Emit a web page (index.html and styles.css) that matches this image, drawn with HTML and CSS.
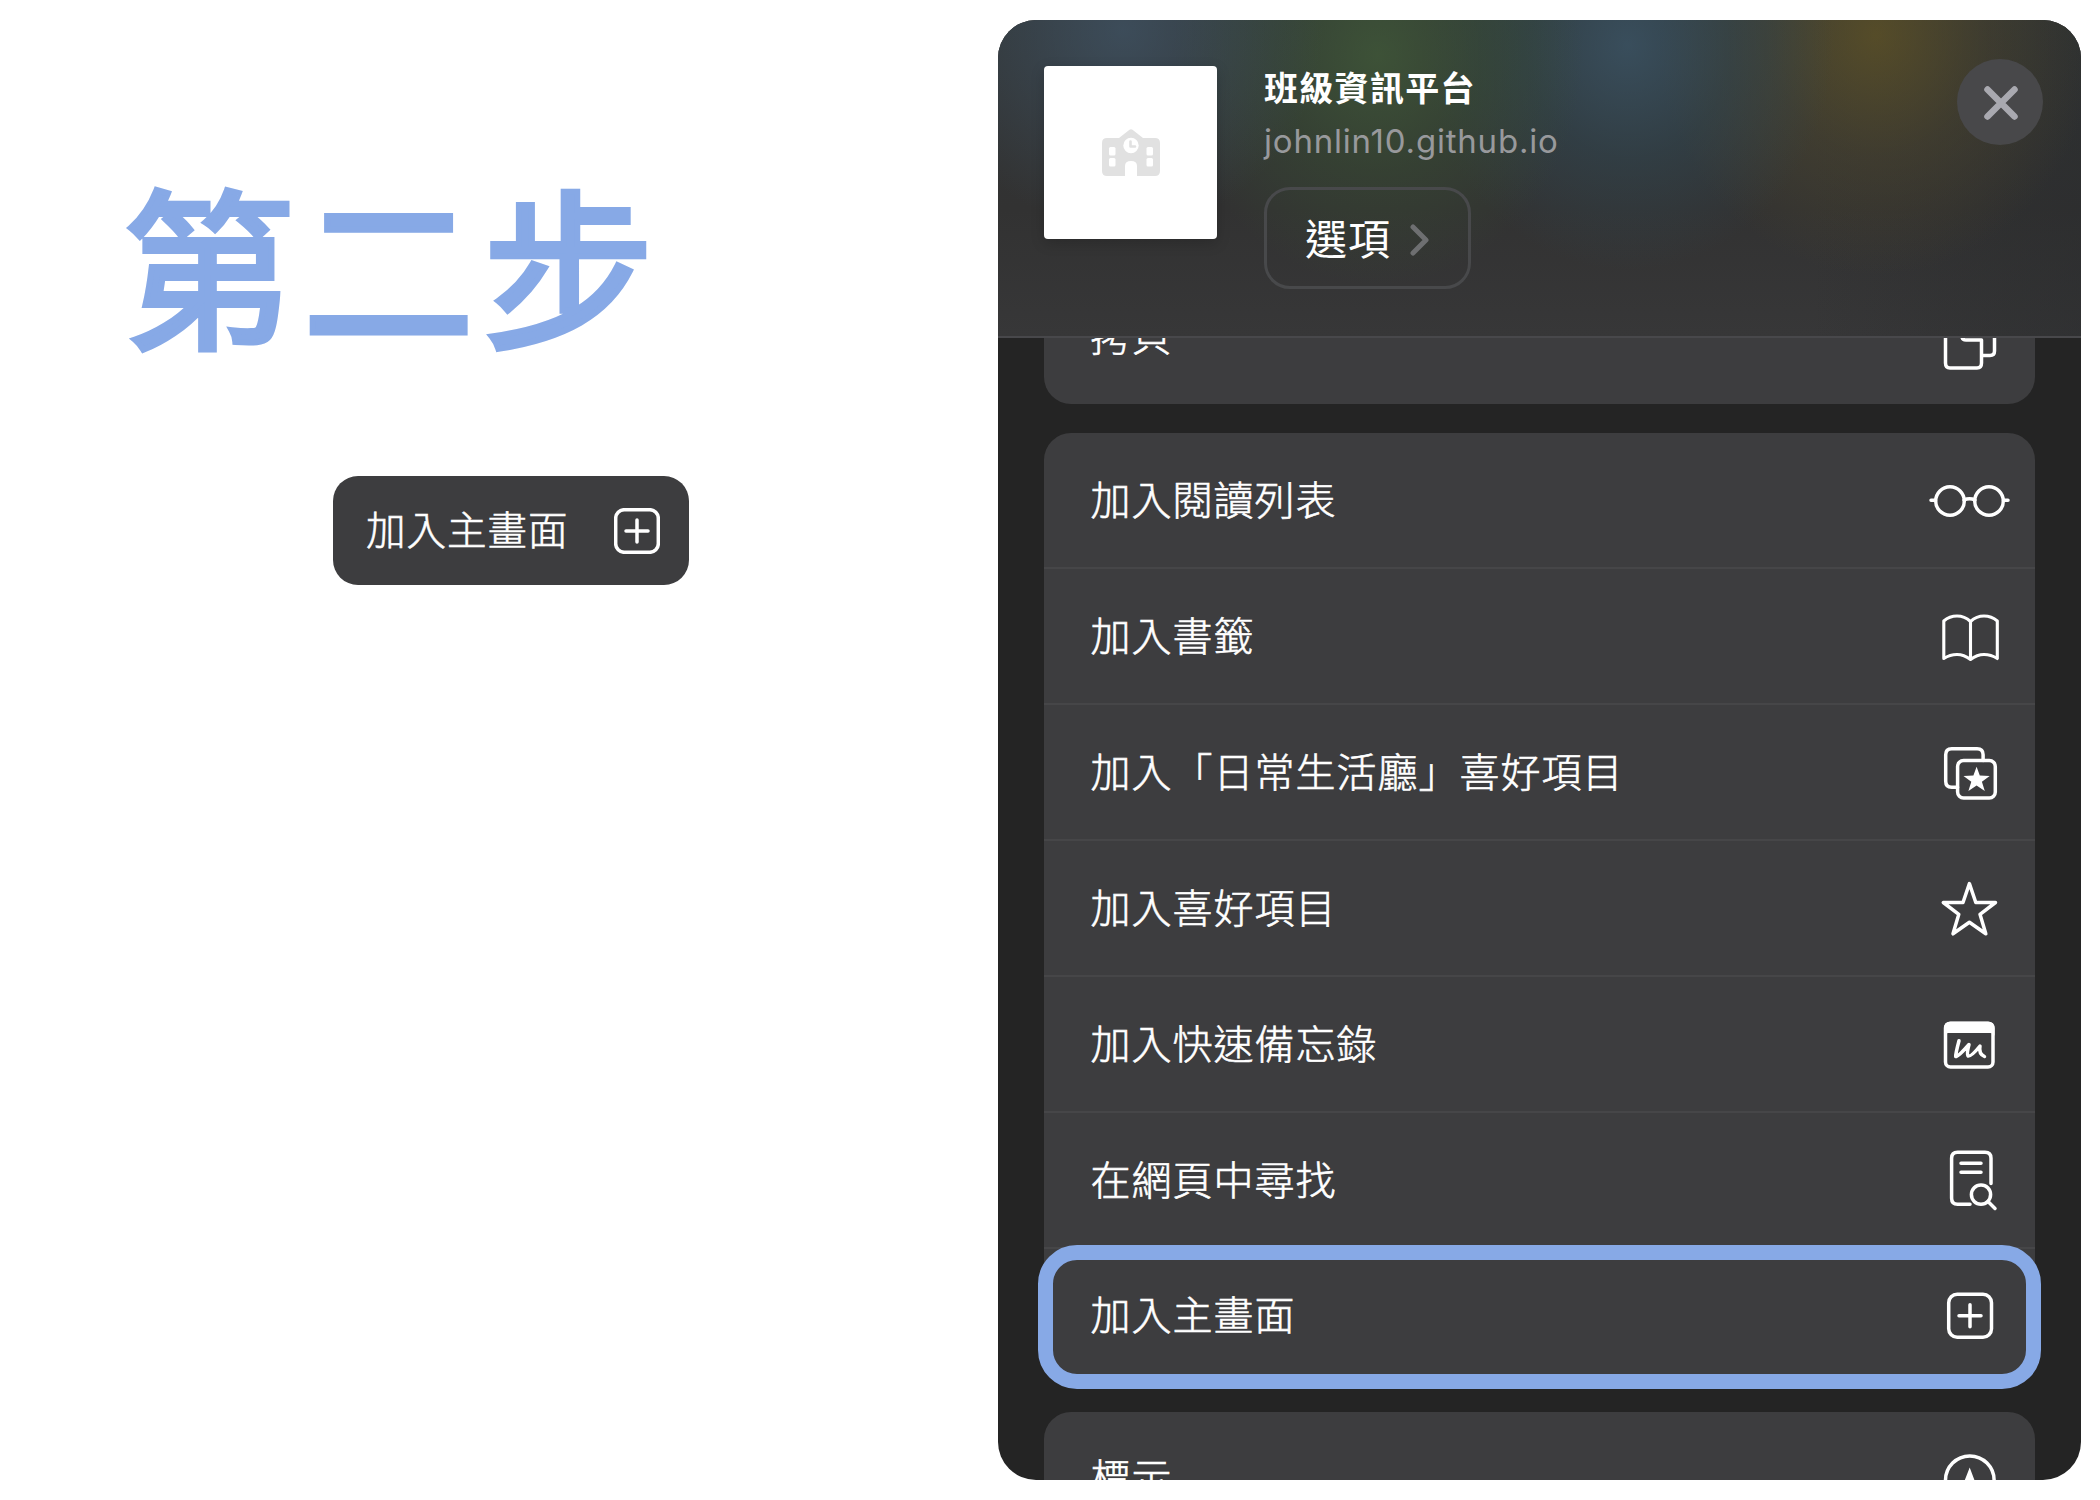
FILE: index.html
```html
<!DOCTYPE html>
<html lang="zh-Hant">
<head>
<meta charset="utf-8">
<title>第二步</title>
<link rel="stylesheet" href="styles.css">
</head>
<body>
<main class="page">
  <section class="step">
    <h1 class="step-title">第二步</h1>
    <div class="pill">
      <span class="pill-label">加入主畫面</span>
      <svg class="pill-icon" viewBox="0 0 46 46"><rect x="1.700" y="1.700" width="42.600" height="42.600" rx="8.500"/><path d="M23 12v22M12 23h22"/></svg>
    </div>
  </section>

  <section class="sheet">
    <header class="sheet-head">
      <div class="thumb">
        <svg class="school" viewBox="0 0 58 47">
          <path fill="#e1e1e1" d="M5 9H17L27.500 .8Q29 -.4 30.500 .8L41 9H53Q58 9 58 14V42Q58 47 53 47H35V37Q35 32 29 32T23 37V47H5Q0 47 0 42V14Q0 9 5 9Z"/>
          <circle cx="29" cy="16.500" r="7.700" fill="#fff"/>
          <path d="M28.500 12.500V17.500H33" fill="none" stroke="#e1e1e1" stroke-width="2.600"/>
          <g fill="#fff"><rect x="7" y="18" width="6.500" height="8.500" rx="1.500"/><rect x="7" y="29" width="6.500" height="8.500" rx="1.500"/><rect x="44.500" y="18" width="6.500" height="8.500" rx="1.500"/><rect x="44.500" y="29" width="6.500" height="8.500" rx="1.500"/></g>
        </svg>
      </div>
      <div class="site">
        <div class="site-name">班級資訊平台</div>
        <div class="site-url">johnlin10.github.io</div>
        <div class="options"><span class="options-label">選項</span><svg class="chevron" viewBox="0 0 20 32"><path d="M3 3L16 16L3 29"/></svg></div>
      </div>
      <div class="close"><svg viewBox="0 0 40 40"><path d="M6.500 6.500L33.500 33.500M33.500 6.500L6.500 33.500"/></svg></div>
    </header>

    <div class="sheet-body">
      <div class="card card-first">
        <div class="row"><span class="label">拷貝</span><svg class="icon" viewBox="0 0 100 100"><path d="M42 36V50Q42 54 46 54H61.500V77Q61.500 82 57 82H30Q25.500 82 25.500 77V36"/><path d="M63 69.500H70Q74.500 69.500 74.500 65V30"/></svg></div>
      </div>
      <div class="card">
        <div class="row"><span class="label">加入閱讀列表</span><svg class="icon" viewBox="0 0 100 100"><circle cx="30" cy="51" r="14.300"/><circle cx="69" cy="51" r="14.300"/><path d="M44 50Q49.500 47.500 55 50M11 50.300H15.500M83.500 50.300H88"/></svg></div>
        <div class="row"><span class="label">加入書籤</span><svg class="icon thin" viewBox="0 0 100 100"><path d="M50.500 35.500Q44.500 30 37 30T23.800 35V72.500Q30 68.500 37 68.500T50.500 73.500Q57 68.500 64 68.500T77.300 72.500V35Q71.500 30 64 30T50.500 35.500V73"/></svg></div>
        <div class="row"><span class="label">加入「日常生活廳」喜好項目</span><svg class="icon" viewBox="0 0 100 100"><path d="M37.600 65.200H31.700Q25.700 65.200 25.700 59.200V32.700Q25.700 26.700 31.700 26.700H57.100Q63.100 26.700 63.100 32.700V38.600"/><rect x="37.600" y="38.600" width="37.700" height="37.500" rx="6"/><path class="solid" d="M56.600 44.700L59.800 53.600L69.700 53.900L61.900 59.700L64.800 69L56.600 63.500L48.400 69L51.300 59.700L43.500 53.900L53.400 53.600Z"/></svg></div>
        <div class="row"><span class="label">加入喜好項目</span><svg class="icon" viewBox="0 0 100 100"><path d="M49.400 25.600L55.800 44.500H75.500L60 56.300L65.800 75.800L49.400 64.200L33 75.800L38.800 56.300L23.300 44.500H43Z"/></svg></div>
        <div class="row"><span class="label">加入快速備忘錄</span><svg class="icon" viewBox="0 0 100 100"><rect x="25.500" y="29.300" width="47.500" height="43.700" rx="5"/><path class="solid" d="M24 34Q24 27.700 30 27.700H68.500Q74.500 27.700 74.500 34V42Q74 39 70 39H28.500Q24.500 39 24 42Z"/><path d="M39 46.700Q35.500 60 35.700 62.500Q38 63 49 50.500Q46.500 60 48 62Q51 63 60 52Q58.500 60 64.500 62.500"/></svg></div>
        <div class="row"><span class="label">在網頁中尋找</span><svg class="icon" viewBox="0 0 100 100"><path d="M50 74.300H37.600Q31.600 74.300 31.600 68.300V28.300Q31.600 22.300 37.600 22.300H65Q71 22.300 71 28.300V53.500"/><path d="M41 33.300H61M41 42.300H61"/><circle cx="61" cy="64.600" r="9.600"/><path d="M68 71.500L75 78.500"/></svg></div>
        <div class="row target"><span class="label">加入主畫面</span><svg class="icon" viewBox="0 0 100 100"><rect x="28.700" y="29.200" width="42.800" height="43" rx="8.500"/><path d="M50 39.700V61.700M39 50.700H61"/></svg></div>
      </div>
      <div class="card">
        <div class="row"><span class="label">標示</span><svg class="icon" viewBox="0 0 100 100"><circle cx="49.800" cy="52.200" r="24.300"/><path class="solid" d="M49.700 39.500L61 69.500L49.700 62.500L38 69.500Z"/></svg></div>
      </div>
    </div>
  </section>
</main>
</body>
</html>
```
FILE: styles.css
```css
* { box-sizing: border-box; }

body {
  margin: 0;
  background: #fff;
  font-family: Inter, "Noto Sans CJK TC", sans-serif;
}

.page {
  display: grid;
  grid-template-columns: 998px 1083px;
  height: 1500px;
  padding-top: 20px;
  overflow: hidden;
}

.step { padding: 126px 0 0 123px; }

.step-title {
  margin: 0;
  height: 230px;
  line-height: 230px;
  font-family: "Noto Sans CJK TC", sans-serif;
  font-size: 171px;
  font-weight: 400;
  letter-spacing: 9px;
  white-space: nowrap;
  color: #87a9e6;
  -webkit-text-stroke: 6px #87a9e6;
  stroke-linejoin: round;
}

.pill {
  display: flex;
  align-items: center;
  justify-content: space-between;
  width: 356px;
  height: 109px;
  margin: 100px 0 0 210px;
  padding: 0 29px 0 33px;
  border-radius: 25px;
  background: #3d3d3f;
  color: #fff;
  font-size: 39.500px;
  font-weight: 300;
  letter-spacing: 1px;
  -webkit-text-stroke: .6px #fff;
}

.pill-label { padding-bottom: 7px; }
.pill-icon { width: 46px; height: 46px; }

svg {
  display: block;
  flex: none;
  fill: none;
  stroke: #fff;
  stroke-width: 3.500px;
  stroke-linecap: round;
  stroke-linejoin: round;
}

.sheet {
  display: flex;
  flex-direction: column;
  height: 1460px;
  overflow: hidden;
  border-radius: 38px;
  background: #242424;
  color: #fff;
}

.sheet-head {
  display: flex;
  align-items: flex-start;
  flex: none;
  height: 318px;
  padding: 46px 38px 0 46px;
  border-bottom: 2px solid #48484b;
  background:
    radial-gradient(ellipse 200px 200px at 125px 10px, rgba(66, 88, 108, .65), rgba(66, 88, 108, .32) 50%, transparent),
    radial-gradient(ellipse 205px 230px at 380px 35px, rgba(66, 94, 56, .7), rgba(58, 84, 50, .4) 50%, transparent),
    radial-gradient(ellipse 205px 225px at 630px 25px, rgba(60, 88, 108, .7), rgba(48, 78, 94, .38) 50%, transparent),
    radial-gradient(ellipse 220px 240px at 878px 15px, rgba(98, 84, 36, .74), rgba(84, 74, 42, .4) 50%, transparent),
    linear-gradient(90deg, transparent 75%, rgba(38, 40, 42, .4)),
    linear-gradient(#323637, #323232 60%, #373738);
}

.thumb {
  display: grid;
  place-items: center;
  width: 173px;
  height: 173px;
  border-radius: 4px;
  background: #fff;
  box-shadow: 0 4px 14px rgba(0, 0, 0, .18);
}

.school { width: 58px; height: 47px; stroke: none; }

.site { flex: 1; padding-left: 47px; }

.site-name {
  height: 46px;
  line-height: 46px;
  font-size: 34px;
  font-weight: 700;
  letter-spacing: 1.300px;
}

.site-url {
  height: 58px;
  line-height: 58px;
  font-size: 33px;
  color: #98999c;
  letter-spacing: .8px;
}

.options {
  display: flex;
  align-items: center;
  width: 207px;
  height: 102px;
  margin-top: 17px;
  padding-left: 38px;
  border: 3px solid #48494b;
  border-radius: 26px;
  font-size: 42px;
  letter-spacing: 1px;
}

.options-label { padding-bottom: 3px; }
.chevron { width: 20px; height: 32px; margin: 4px 0 0 19px; stroke: #6e6f71; stroke-width: 5px; }

.close {
  display: grid;
  place-items: center;
  width: 86px;
  height: 86px;
  margin-top: -7px;
  border-radius: 50%;
  background: #48484a;
}

.close svg { width: 40px; height: 40px; margin: 2px 0 0 1px; stroke: #a9a9b0; stroke-width: 6.500px; }

.sheet-body {
  display: flex;
  flex-direction: column;
  gap: 29px;
  flex: 1;
  min-height: 0;
  padding: 0 46px;
  overflow: hidden;
}

.card {
  flex: none;
  border-radius: 27px;
  background: #3d3d3f;
}

.card-first { margin-top: -68px; }

.row {
  display: flex;
  align-items: center;
  justify-content: space-between;
  height: 136px;
  padding: 0 15px 0 46.500px;
  border-bottom: 2px solid #464648;
  font-size: 40px;
  font-weight: 300;
  letter-spacing: 1px;
  white-space: nowrap;
  -webkit-text-stroke: .6px #fff;
}

.row:last-child { height: 134px; border-color: transparent; }

.label { padding-bottom: 4px; }
.icon { width: 100px; height: 100px; }
.thin { stroke-width: 3.100px; }
.solid { fill: #fff; stroke: none; }

.target { position: relative; }

.target::after {
  content: "";
  position: absolute;
  inset: -4px -6px -8px;
  border: 15px solid #87a9e6;
  border-radius: 39px;
}
```
